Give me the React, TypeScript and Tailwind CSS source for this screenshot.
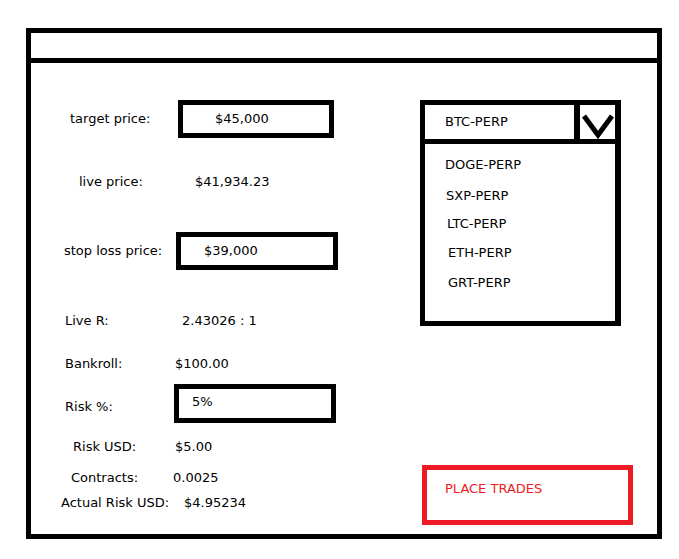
function Field({
  value,
  width,
  textPad,
}: {
  value: string;
  width: string;
  textPad: string;
}) {
  return (
    <div
      className={`${width} h-[38px] border-[5px] border-black flex items-center ${textPad}`}
    >
      {value}
    </div>
  );
}

const coins = [
  { name: "DOGE-PERP", cls: "mt-[12px] pl-[20px]" },
  { name: "SXP-PERP", cls: "mt-[13px] pl-[21px]" },
  { name: "LTC-PERP", cls: "mt-[10px] pl-[22px]" },
  { name: "ETH-PERP", cls: "mt-[11px] pl-[23px]" },
  { name: "GRT-PERP", cls: "mt-[12px] pl-[23px]" },
];

export default function App() {
  return (
    <div className="w-[679px] h-[559px] bg-white pt-[28px] pl-[26px] font-['DejaVu_Sans',sans-serif] text-[13px] text-black leading-[16px]">
      <div className="w-[636px] h-[511px] border-[5px] border-black flex flex-col">
        {/* Header */}
        <div className="h-[30px] border-b-[5px] border-black shrink-0"></div>

        {/* Body */}
        <div className="flex">
          {/* Left column */}
          <div className="w-[389px] flex flex-col">
            <div className="flex items-center mt-[37px]">
              <div className="w-[147px] pl-[39px]">target price:</div>
              <Field value="$45,000" width="w-[156px]" textPad="pl-[32px]" />
            </div>

            <div className="flex items-center h-[20px] mt-[34px]">
              <div className="w-[164px] pl-[48px]">live price:</div>
              <div>$41,934.23</div>
            </div>

            <div className="flex items-center mt-[40px]">
              <div className="w-[145px] pl-[33px]">stop loss price:</div>
              <Field value="$39,000" width="w-[162px]" textPad="pl-[23px]" />
            </div>

            <div className="flex items-center h-[20px] mt-[41px]">
              <div className="w-[151px] pl-[34px]">Live R:</div>
              <div>2.43026 : 1</div>
            </div>

            <div className="flex items-center h-[20px] mt-[23px]">
              <div className="w-[144px] pl-[34px]">Bankroll:</div>
              <div>$100.00</div>
            </div>

            <div className="flex items-center mt-[10px]">
              <div className="w-[143px] pl-[34px] pt-[7px]">Risk %:</div>
              <div className="w-[162px] h-[39px] border-[5px] border-black flex items-center pl-[13px] pb-[3px]">
                5%
              </div>
            </div>

            <div className="flex items-center h-[20px] mt-[14px]">
              <div className="w-[144px] pl-[42px]">Risk USD:</div>
              <div>$5.00</div>
            </div>

            <div className="flex items-center h-[20px] mt-[11px]">
              <div className="w-[142px] pl-[40px]">Contracts:</div>
              <div>0.0025</div>
            </div>

            <div className="flex items-center h-[20px] mt-[5px]">
              <div className="w-[153px] pl-[30px]">Actual Risk USD:</div>
              <div>$4.95234</div>
            </div>
          </div>

          {/* Right column */}
          <div className="flex flex-col">
            <div className="mt-[37px] w-[201px] h-[226px] border-[5px] border-r-[6px] border-black flex flex-col">
              <div className="h-[39px] border-b-[5px] border-black flex shrink-0">
                <div className="flex-1 flex items-center pl-[20px]">BTC-PERP</div>
                <div className="w-[41px] border-l-[6px] border-black">
                  <svg width="35" height="34" viewBox="0 0 35 34">
                    <polyline
                      points="4,11 18,30 32,11"
                      fill="none"
                      stroke="black"
                      strokeWidth="5"
                    />
                  </svg>
                </div>
              </div>
              {coins.map((c) => (
                <div key={c.name} className={`h-[18px] flex items-center ${c.cls}`}>
                  {c.name}
                </div>
              ))}
            </div>

            <div className="mt-[139px] ml-[2px] w-[211px] h-[60px] border-[5px] border-[#ed1c24] text-[#ed1c24] pl-[18px] pt-[11px]">
              PLACE TRADES
            </div>
          </div>
        </div>
      </div>
    </div>
  );
}
